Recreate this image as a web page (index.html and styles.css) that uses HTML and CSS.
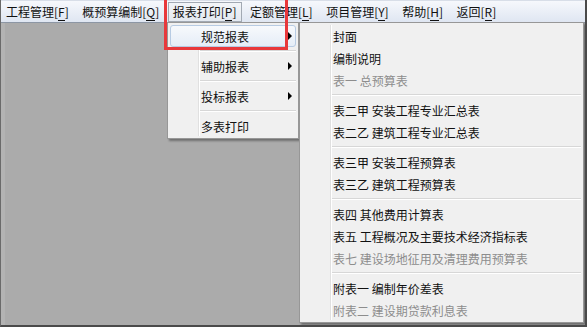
FILE: index.html
```html
<!DOCTYPE html>
<html lang="zh">
<head>
    <meta charset="UTF-8">
    <title>报表打印</title>
    <link rel="stylesheet" href="styles.css">
</head>
<body>
    <div class="window">
        <div class="menubar">
            <span class="bar-item">工程管理[<u>F</u>]</span>
            <span class="bar-item">概预算编制[<u>Q</u>]</span>
            <span class="bar-item active">报表打印[<u>P</u>]</span>
            <span class="bar-item">定额管理[<u>L</u>]</span>
            <span class="bar-item">项目管理[<u>Y</u>]</span>
            <span class="bar-item">帮助[<u>H</u>]</span>
            <span class="bar-item">返回[<u>R</u>]</span>
        </div>
        <div class="workspace"></div>

        <!-- 报表打印 下拉菜单 -->
        <div class="menu menu-main">
            <div class="menu-item hover"><span>规范报表</span><i class="arrow"></i></div>
            <div class="sep"></div>
            <div class="menu-item"><span>辅助报表</span><i class="arrow"></i></div>
            <div class="sep"></div>
            <div class="menu-item"><span>投标报表</span><i class="arrow"></i></div>
            <div class="sep"></div>
            <div class="menu-item"><span>多表打印</span></div>
        </div>

        <!-- 规范报表 子菜单 -->
        <div class="menu menu-sub">
            <div class="menu-item"><span>封面</span></div>
            <div class="menu-item"><span>编制说明</span></div>
            <div class="menu-item disabled"><span>表一 总预算表</span></div>
            <div class="sep"></div>
            <div class="menu-item"><span>表二甲 安装工程专业汇总表</span></div>
            <div class="menu-item"><span>表二乙 建筑工程专业汇总表</span></div>
            <div class="sep"></div>
            <div class="menu-item"><span>表三甲 安装工程预算表</span></div>
            <div class="menu-item"><span>表三乙 建筑工程预算表</span></div>
            <div class="sep"></div>
            <div class="menu-item"><span>表四 其他费用计算表</span></div>
            <div class="menu-item"><span>表五 工程概况及主要技术经济指标表</span></div>
            <div class="menu-item disabled"><span>表七 建设场地征用及清理费用预算表</span></div>
            <div class="sep"></div>
            <div class="menu-item"><span>附表一 编制年价差表</span></div>
            <div class="menu-item disabled"><span>附表二 建设期贷款利息表</span></div>
        </div>

        <div class="mark"></div>
    </div>
</body>
</html>
```

FILE: styles.css
```css
body {
    margin: 0;
    font-family: "Noto Sans CJK SC", "Microsoft YaHei", sans-serif;
    font-size: 12px;
    color: #111;
}

.window {
    position: relative;
    width: 587px;
    height: 327px;
    box-sizing: border-box;
    border-left: 1px solid #6a6a6a;
    border-right: 2px solid #4a4a4a;
    border-bottom: 2px solid #4a4a4a;
    background: #ababab;
    display: flex;
    flex-direction: column;
    overflow: hidden;
}

.menubar {
    height: 21px;
    display: flex;
    align-items: center;
    background: linear-gradient(#f6f8fc, #dfe6f2);
    border-top: 1px solid #d8dee8;
    border-bottom: 1px solid #8c96a4;
}

.bar-item {
    padding: 1px 4px 2px;
    margin-right: 3.5px;
    line-height: 15px;
    border: 1px solid transparent;
    white-space: nowrap;
}

.bar-item u {
    text-decoration: none;
    border-bottom: 1px solid #111;
}

.bar-item.active {
    border-color: #a2a9b3;
    background: linear-gradient(#f3f5f8, #e4e9f0);
}

.workspace {
    flex: 1;
    border-left: 4px solid #b3b3b3;
}

/* 下拉菜单 */
.menu {
    position: absolute;
    top: 22px;
    background: #f0f0f0;
    border: 1px solid #979797;
    box-shadow: 2px 2px 2px rgba(0, 0, 0, 0.35);
    box-sizing: border-box;
    padding: 2px 2px;
}

.menu::before {
    content: "";
    position: absolute;
    top: 2px;
    bottom: 2px;
    left: 30px;
    width: 1px;
    background: #e0e0e0;
    border-right: 1px solid #fff;
}

.menu-main {
    left: 166px;
    width: 132px;
    height: 117px;
}

.menu-sub {
    left: 298px;
    width: 285px;
    height: 301px;
    z-index: 1;
}

.menu-item {
    position: relative;
    height: 22px;
    display: flex;
    align-items: center;
    padding-left: 30px;
    border: 1px solid transparent;
    box-sizing: border-box;
    white-space: nowrap;
}

.menu-item.hover {
    border-color: #b7cbe3;
    border-radius: 3px;
    background: linear-gradient(#f7f9fc, #e5edf7);
}

.menu-item.disabled {
    color: #8d8d8d;
}

.arrow {
    margin-left: auto;
    margin-right: 3px;
    width: 0;
    height: 0;
    border-left: 4px solid #000;
    border-top: 4px solid transparent;
    border-bottom: 4px solid transparent;
}

.sep {
    height: 8px;
    margin-left: 30px;
    position: relative;
}

.sep::after {
    content: "";
    position: absolute;
    left: 0;
    right: 0;
    top: 3px;
    height: 1px;
    background: #d7d7d7;
    border-bottom: 1px solid #fff;
}

/* 红色标注框 */
.mark {
    position: absolute;
    left: 163px;
    top: -4px;
    width: 124px;
    height: 54px;
    border: 3px solid #e8383b;
    box-sizing: border-box;
    z-index: 2;
}
```
